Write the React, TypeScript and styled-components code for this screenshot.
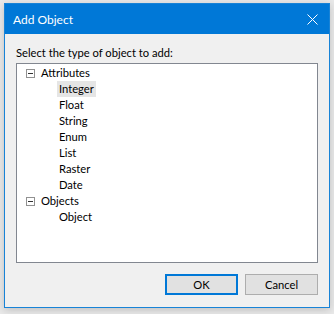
import styled, { createGlobalStyle } from "styled-components";

const Global = createGlobalStyle`
  body {
    margin: 0;
    background: #e9e9e9;
    font-family: Lato, "Noto Sans", sans-serif;
  }
`;

const Screen = styled.div`
  width: 334px;
  height: 314px;
  padding: 3px 0 0 4px;
  box-sizing: border-box;
`;

const Window = styled.div`
  width: 326px;
  height: 305px;
  box-sizing: border-box;
  border: 1px solid #1883d7;
  background: #f0f0f0;
  display: flex;
  flex-direction: column;
  box-shadow: 0 2px 8px rgba(0, 0, 0, 0.18);
`;

const TitleBar = styled.div`
  height: 30px;
  background: #0078d7;
  color: #fff;
  display: flex;
  align-items: center;
  justify-content: space-between;
  padding: 0 8px 0 8px;
  font-size: 12px;
`;

const CloseButton = styled.div`
  width: 14px;
  height: 14px;
  display: flex;
  align-items: center;
  justify-content: center;
  margin-right: 2px;
`;

const Body = styled.div`
  flex: 1;
  display: flex;
  flex-direction: column;
  padding: 10px 10px 0 11px;
`;

const Label = styled.div`
  font-size: 11.2px;
  color: #000;
  height: 19px;
  line-height: 17px;
`;

const TreeBox = styled.div`
  height: 200px;
  width: 302px;
  box-sizing: border-box;
  border: 1px solid #828790;
  background: #fff;
  padding: 1px 0 0 0;
`;

const Row = styled.div<{ $level: number }>`
  display: flex;
  align-items: center;
  height: 16px;
  padding-left: ${(p) => (p.$level === 0 ? 9 : 40)}px;
  font-size: 11.2px;
  color: #000;
`;

const RowText = styled.span<{ $selected?: boolean }>`
  background: ${(p) => (p.$selected ? "#e5e5e5" : "transparent")};
  padding: 0 2px;
  line-height: 16px;
`;

const Toggle = styled.span`
  width: 9px;
  height: 9px;
  box-sizing: border-box;
  border: 1px solid #919191;
  display: inline-flex;
  align-items: center;
  justify-content: center;
  margin-right: 4px;
  &::after {
    content: "";
    width: 5px;
    height: 1px;
    background: #333;
  }
`;

const Buttons = styled.div`
  display: flex;
  justify-content: flex-end;
  gap: 7px;
  padding: 11px 1px 0 0;
`;

const Button = styled.div<{ $default?: boolean }>`
  width: 73px;
  height: 21px;
  box-sizing: border-box;
  background: #e1e1e1;
  border: ${(p) => (p.$default ? "2px solid #0078d7" : "1px solid #adadad")};
  display: flex;
  align-items: center;
  justify-content: center;
  font-size: 11.2px;
  color: #000;
`;

const tree = [
  { label: "Attributes", children: ["Integer", "Float", "String", "Enum", "List", "Raster", "Date"] },
  { label: "Objects", children: ["Object"] },
];

export default function App() {
  return (
    <Screen>
      <Global />
      <Window>
        <TitleBar>
          <span>Add Object</span>
          <CloseButton>
            <svg width="11" height="11" viewBox="0 0 11 11">
              <path d="M0.5 0.5 L10.5 10.5 M10.5 0.5 L0.5 10.5" stroke="#fff" strokeWidth="1" />
            </svg>
          </CloseButton>
        </TitleBar>
        <Body>
          <Label>Select the type of object to add:</Label>
          <TreeBox>
            {tree.map((node) => (
              <div key={node.label}>
                <Row $level={0}>
                  <Toggle />
                  <RowText>{node.label}</RowText>
                </Row>
                {node.children.map((c) => (
                  <Row key={c} $level={1}>
                    <RowText $selected={c === "Integer"}>{c}</RowText>
                  </Row>
                ))}
              </div>
            ))}
          </TreeBox>
          <Buttons>
            <Button $default>OK</Button>
            <Button>Cancel</Button>
          </Buttons>
        </Body>
      </Window>
    </Screen>
  );
}
